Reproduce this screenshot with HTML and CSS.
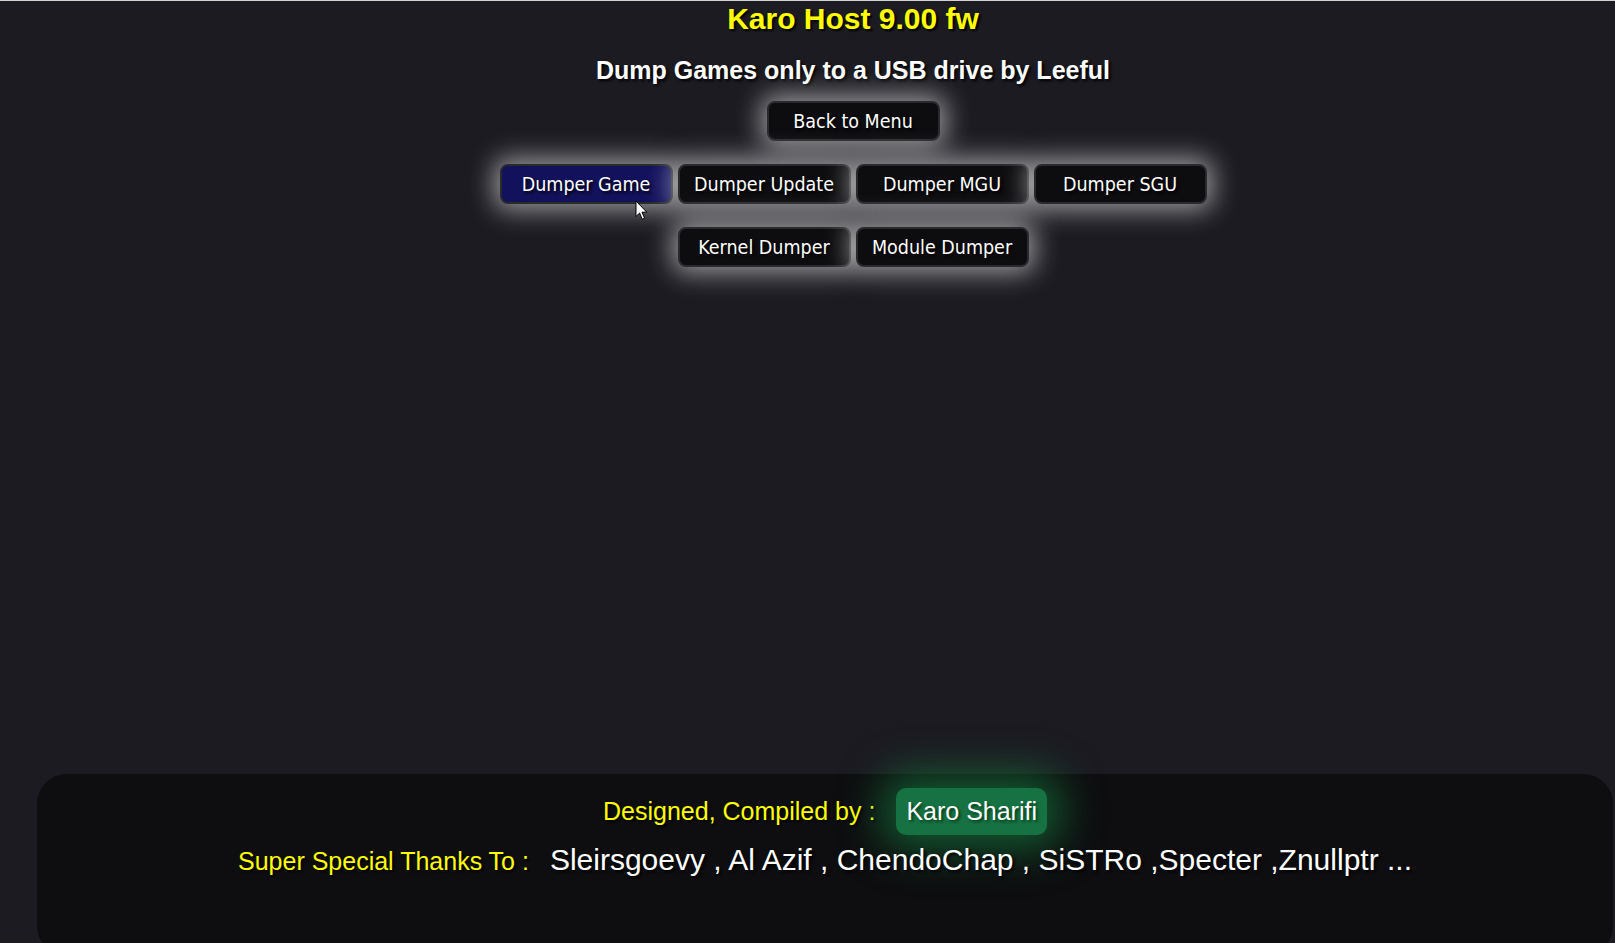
FILE: index.html
```html
<!DOCTYPE html>
<html lang="en">
<head>
<meta charset="utf-8">
<title>Karo Host 9.00 fw</title>
<link rel="stylesheet" href="styles.css">
</head>
<body>
<main class="main">
  <h1 class="title">Karo Host 9.00 fw</h1>
  <h2 class="subtitle">Dump Games only to a USB drive by Leeful</h2>
  <div class="row row-back">
    <button class="btn" type="button">Back to Menu</button>
  </div>
  <div class="row row-first">
    <button class="btn btn-active" type="button">Dumper Game</button>
    <button class="btn" type="button">Dumper Update</button>
    <button class="btn" type="button">Dumper MGU</button>
    <button class="btn" type="button">Dumper SGU</button>
  </div>
  <div class="row row-second">
    <button class="btn" type="button">Kernel Dumper</button>
    <button class="btn" type="button">Module Dumper</button>
  </div>
</main>
<footer class="footer">
  <div class="credit-line">
    <span class="label">Designed, Compiled by :</span>
    <span class="author">Karo Sharifi</span>
  </div>
  <div class="credit-line thanks-line">
    <span class="label">Super Special Thanks To :</span>
    <span class="names">Sleirsgoevy , Al Azif , ChendoChap , SiSTRo ,Specter ,Znullptr ...</span>
  </div>
</footer>
<svg class="cursor" width="13" height="21" viewBox="0 0 13 21" aria-hidden="true">
  <path d="M1 1 L1 16.5 L4.6 13 L7.2 19.2 L9.6 18.2 L7 12.2 L11.8 12.2 Z" fill="#fff" stroke="#000" stroke-width="1" stroke-linejoin="miter"/>
</svg>
</body>
</html>
```

FILE: styles.css
```css
html {
  overflow: hidden;
}

body {
  margin: 0;
  height: calc(100vh + 13px);
  border-top: 1px solid #d2d2d2;
  box-sizing: border-box;
  background: #1c1b21;
  display: flex;
  flex-direction: column;
  position: relative;
  font-family: "Liberation Sans", Arial, sans-serif;
}

.main {
  flex: 1 1 auto;
  padding-left: 91px;
  text-align: center;
}

.title {
  margin: 1px 0 0;
  font-size: 30px;
  line-height: 34px;
  font-weight: 700;
  color: #ffff00;
  text-shadow: 2px 2px 2px #000;
}

.subtitle {
  margin: 20px 0 0;
  font-size: 25px;
  line-height: 29px;
  font-weight: 700;
  color: #ffffff;
  text-shadow: 2px 2px 3px #000;
}

.row {
  display: flex;
  justify-content: center;
  gap: 5px;
}

.row-back {
  margin-top: 16px;
}

.row-first {
  margin-top: 23px;
}

.row-second {
  margin-top: 23px;
}

.btn {
  width: 173px;
  height: 40px;
  box-sizing: border-box;
  padding: 7px 0 5px;
  border: 2px solid #2a2a2d;
  border-radius: 8px;
  background: #0d0d0f;
  color: #ffffff;
  font-family: "DejaVu Sans Condensed", "DejaVu Sans", sans-serif;
  font-size: 19.5px;
  line-height: 24px;
  text-shadow: 2px 2px 3px #000;
  box-shadow: 0 0 26px 6px rgba(255, 255, 255, 0.55);
  cursor: pointer;
}

.btn-active {
  background: #12115c;
}

.footer {
  flex: 0 0 182px;
  box-sizing: border-box;
  margin-left: 37px;
  width: 1576px;
  border-radius: 30px;
  background: #0e0e10;
  padding-top: 14px;
  display: flex;
  flex-direction: column;
  align-items: center;
}

.credit-line {
  display: flex;
  align-items: baseline;
  gap: 21px;
}

.thanks-line {
  margin-top: 8px;
}

.label {
  font-size: 25px;
  color: #ffff00;
  text-shadow: 2px 2px 2px #000;
}

.author {
  font-size: 25px;
  color: #ffffff;
  padding: 9px 10px;
  border-radius: 10px;
  background: #177243;
  box-shadow: 0 0 42px 14px rgba(24, 140, 70, 0.6);
  text-shadow: 2px 2px 3px #063b1c;
}

.names {
  font-size: 30px;
  color: #ffffff;
  text-shadow: 2px 2px 3px #000;
}

.cursor {
  position: absolute;
  left: 635px;
  top: 199px;
}
```
